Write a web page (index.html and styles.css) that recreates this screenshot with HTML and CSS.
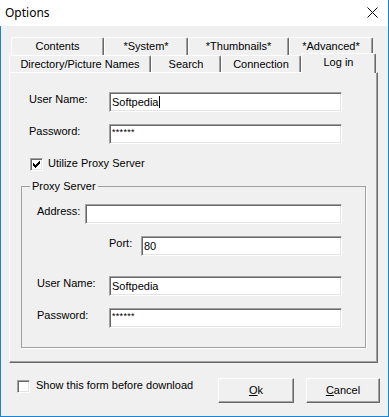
FILE: index.html
```html
<!DOCTYPE html>
<html>
<head>
<meta charset="utf-8">
<title>Options</title>
<link rel="stylesheet" href="styles.css">
</head>
<body>
<div class="window">
  <div class="titlebar">
    <span class="title">Options</span>
    <svg class="close" width="11" height="11" viewBox="0 0 11 11"><path d="M0.5 0.5 L10.5 10.5 M10.5 0.5 L0.5 10.5" stroke="#000" stroke-width="1" fill="none"/></svg>
  </div>
  <div class="client">
    <div class="tabs">
      <div class="tabrow row-back">
        <div class="tab t-contents">Contents</div>
        <div class="tab t-system">*System*</div>
        <div class="tab t-thumbs">*Thumbnails*</div>
        <div class="tab t-adv">*Advanced*</div>
      </div>
      <div class="tabrow row-front">
        <div class="tab t-dir">Directory/Picture Names</div>
        <div class="tab t-search">Search</div>
        <div class="tab t-conn">Connection</div>
        <div class="tab t-login selected">Log in</div>
      </div>
    </div>
    <div class="panel">
      <div class="field top-field">
        <span class="lbl lbl-wide">User Name:</span>
        <div class="edit w-233">Softpedia<span class="caret"></span></div>
      </div>
      <div class="field top-field gap-12">
        <span class="lbl lbl-wide">Password:</span>
        <div class="edit w-233"><span class="pw">******</span></div>
      </div>
      <div class="check-row proxy-check">
        <span class="checkbox"><svg width="11" height="11" viewBox="0 0 11 11" shape-rendering="crispEdges"><g fill="#000"><rect x="2" y="4" width="1" height="3"/><rect x="3" y="5" width="1" height="3"/><rect x="4" y="6" width="1" height="3"/><rect x="5" y="5" width="1" height="3"/><rect x="6" y="4" width="1" height="3"/><rect x="7" y="3" width="1" height="3"/><rect x="8" y="2" width="1" height="3"/></g></svg></span>
        <span class="check-label">Utilize Proxy Server</span>
      </div>
      <fieldset class="group">
        <legend>Proxy Server</legend>
        <div class="field grp-field first">
          <span class="lbl lbl-addr">Address:</span>
          <div class="edit w-257"></div>
        </div>
        <div class="field port-field gap-12">
          <span class="lbl lbl-port">Port:</span>
          <div class="edit w-201">80</div>
        </div>
        <div class="field grp-field gap-20">
          <span class="lbl lbl-user">User Name:</span>
          <div class="edit w-233">Softpedia</div>
        </div>
        <div class="field grp-field gap-12">
          <span class="lbl lbl-user">Password:</span>
          <div class="edit w-233"><span class="pw">******</span></div>
        </div>
      </fieldset>
    </div>
    <div class="footer">
      <div class="check-row show-check">
        <span class="checkbox"></span>
        <span class="check-label">Show this form before download</span>
      </div>
      <div class="buttons">
        <div class="btn btn-ok"><u>O</u>k</div>
        <div class="btn btn-cancel"><u>C</u>ancel</div>
      </div>
    </div>
  </div>
</div>
</body>
</html>
```

FILE: styles.css
```css
html, body {
  margin: 0;
  padding: 0;
  background: #f0f0f0;
}

.window {
  width: 389px;
  height: 417px;
  box-sizing: border-box;
  border-right: 1px solid #1883d7;
  border-bottom: 1px solid #1883d7;
  background: #f0f0f0;
  display: flex;
  flex-direction: column;
  font-family: "Liberation Sans", Arial, sans-serif;
  font-size: 11px;
  color: #000;
  overflow: hidden;
}

.titlebar {
  height: 26px;
  flex: none;
  background: #fff;
  display: flex;
  align-items: center;
  justify-content: space-between;
  padding: 0 10px 0 5px;
}

.title {
  font-family: "Noto Sans", "Open Sans", sans-serif;
  font-size: 12px;
  line-height: 16px;
  margin-top: -1px;
}

.close {
  display: block;
  margin-top: -1px;
}

.client {
  flex: 1;
  border-left: 1px solid #1883d7;
  display: flex;
  flex-direction: column;
}

.tabs {
  margin-top: 11px;
}

.tabrow {
  display: flex;
}

.row-back {
  height: 18px;
  padding-left: 10px;
}

.row-front {
  height: 17px;
  padding-left: 8px;
}

.tab {
  box-sizing: border-box;
  height: 100%;
  border-top: 1px solid #fff;
  border-left: 1px solid #fff;
  border-right: 1px solid #696969;
  box-shadow: inset -1px 0 #a0a0a0;
  border-radius: 2px 2px 0 0;
  background: #f0f0f0;
  display: flex;
  align-items: center;
  justify-content: center;
  line-height: 13px;
  white-space: nowrap;
}

.row-back .tab {
  padding-bottom: 1px;
}

.t-contents { width: 93px; }
.t-system { width: 84px; }
.t-thumbs { width: 101px; }
.t-adv { width: 84px; }
.t-dir { width: 142px; }
.t-search { width: 70px; }
.t-conn { width: 80px; }
.t-login { width: 75px; }

.selected {
  position: relative;
  z-index: 1;
  height: 20px;
  margin-top: -2px;
  padding-bottom: 2px;
}

.panel {
  margin-left: 8px;
  width: 369px;
  height: 291px;
  box-sizing: border-box;
  border-top: 1px solid #fff;
  border-left: 1px solid #fff;
  border-right: 1px solid #696969;
  border-bottom: 1px solid #696969;
  box-shadow: inset -1px -1px #a0a0a0;
  padding-top: 19px;
  display: flex;
  flex-direction: column;
}

.field {
  display: flex;
  align-items: flex-start;
  height: 20px;
}

.lbl {
  flex: none;
  line-height: 13px;
  padding-top: 1px;
  white-space: nowrap;
}

.top-field { padding-left: 19px; }
.lbl-wide { width: 80px; }

.gap-12 { margin-top: 12px; }
.gap-20 { margin-top: 20px; }

.edit {
  flex: none;
  box-sizing: border-box;
  height: 20px;
  background: #fff;
  border: 1px solid;
  border-color: #a0a0a0 #fff #fff #a0a0a0;
  box-shadow: inset 1px 1px #696969, inset -1px -1px #e3e3e3;
  padding-left: 2px;
  display: flex;
  align-items: center;
  line-height: 13px;
  white-space: nowrap;
}

.w-233 { width: 233px; }
.w-257 { width: 257px; }
.w-201 { width: 201px; }

.caret {
  display: inline-block;
  width: 1px;
  height: 12px;
  background: #000;
  margin-left: 1px;
}

.pw {
  font-size: 9px;
  letter-spacing: 0.3px;
  margin-top: -3px;
}

.check-row {
  display: flex;
  align-items: center;
}

.checkbox {
  box-sizing: border-box;
  width: 13px;
  height: 13px;
  flex: none;
  background: #fff;
  border: 1px solid;
  border-color: #a0a0a0 #fff #fff #a0a0a0;
  box-shadow: inset 1px 1px #696969, inset -1px -1px #e3e3e3;
}

.checkbox svg {
  display: block;
}

.check-label {
  line-height: 13px;
  margin-left: 5px;
  margin-top: -2px;
}

.proxy-check {
  margin-top: 14px;
  padding-left: 20px;
  height: 13px;
}

.group {
  margin: 9px 0 0 11px;
  padding: 0;
  width: 345px;
  height: 168px;
  box-sizing: border-box;
  min-width: 0;
  border: 1px solid #a0a0a0;
  box-shadow: 1px 1px 0 #fff;
}

.group legend {
  margin-left: 8px;
  padding: 0 2px;
  line-height: 13px;
}

.grp-field { padding-left: 15px; }
.grp-field.first { margin-top: 11px; }
.lbl-addr { width: 48px; }
.lbl-user { width: 72px; }

.port-field { padding-left: 87px; }
.lbl-port { width: 32px; }

.footer {
  display: flex;
  align-items: flex-start;
  margin-top: 15px;
  padding-left: 16px;
  padding-right: 8px;
}

.show-check {
  margin-top: 2px;
}

.show-check .check-label {
  margin-left: 6px;
}

.buttons {
  margin-left: auto;
  display: flex;
  gap: 12px;
}

.btn {
  box-sizing: border-box;
  height: 25px;
  border: 1px solid;
  border-color: #fff #696969 #696969 #fff;
  box-shadow: inset -1px -1px #a0a0a0;
  background: #f0f0f0;
  display: flex;
  align-items: center;
  justify-content: center;
  line-height: 13px;
}

.btn-ok { width: 76px; }
.btn-cancel { width: 74px; }
```
